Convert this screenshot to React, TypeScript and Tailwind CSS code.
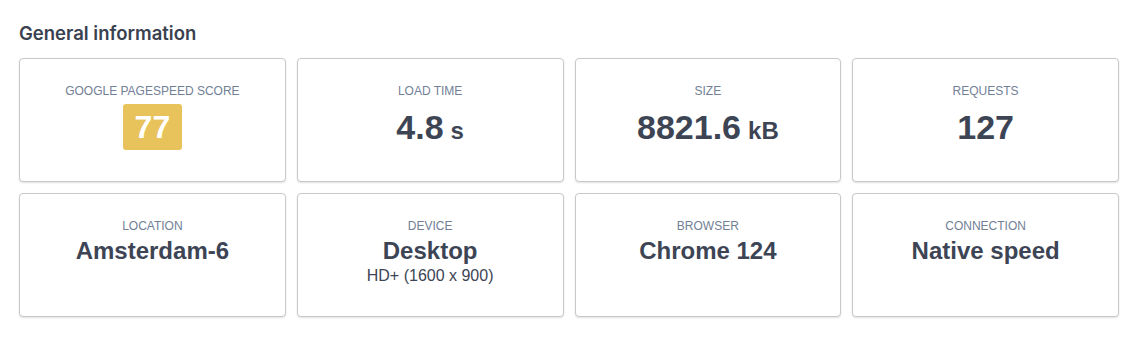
const TOP = [
  { label: "Google PageSpeed Score", score: "77" },
  { label: "Load time", value: "4.8", unit: "s" },
  { label: "Size", value: "8821.6", unit: "kB" },
  { label: "Requests", value: "127" },
];

const BOTTOM = [
  { label: "Location", value: "Amsterdam-6" },
  { label: "Device", value: "Desktop", sub: "HD+ (1600 x 900)" },
  { label: "Browser", value: "Chrome 124" },
  { label: "Connection", value: "Native speed" },
];

function Card({ children }: { children: React.ReactNode }) {
  return (
    <div className="flex h-[124px] flex-col items-center rounded-[4px] border border-[#c9c9c9] bg-white pt-[24px] shadow-[0_1px_2px_rgba(0,0,0,0.12)]">
      {children}
    </div>
  );
}

function Label({ text }: { text: string }) {
  return (
    <p className="text-[12px] uppercase leading-[16px] text-[#718096]">
      {text}
    </p>
  );
}

export default function App() {
  return (
    <div className="min-h-screen bg-white px-[19px] pt-[20px] font-['Liberation_Sans',Arial,sans-serif] text-[#3d4555] antialiased">
      <h2 className="font-['Inter',sans-serif] text-[18.5px] font-semibold leading-[26px] text-[#3a4150]">
        General information
      </h2>

      <div className="mt-[12px] grid grid-cols-4 gap-[11px]">
        {TOP.map((c) => (
          <Card key={c.label}>
            <Label text={c.label} />
            {c.score ? (
              <div className="mt-[5px] flex h-[46px] w-[59px] items-center justify-center rounded-[3px] bg-[#e8c25a] text-[32px] font-bold leading-none text-white">
                {c.score}
              </div>
            ) : (
              <p className="mt-[9px] text-[34px] font-bold leading-[38px]">
                {c.value}
                {c.unit && (
                  <span className="ml-[7px] text-[24px]">{c.unit}</span>
                )}
              </p>
            )}
          </Card>
        ))}
        {BOTTOM.map((c) => (
          <Card key={c.label}>
            <Label text={c.label} />
            <p className="mt-[3px] text-[24px] font-bold leading-[28px]">
              {c.value}
            </p>
            {c.sub && (
              <p className="mt-px text-[16px] leading-[20px] text-[#3d4555]">
                {c.sub}
              </p>
            )}
          </Card>
        ))}
      </div>
    </div>
  );
}
